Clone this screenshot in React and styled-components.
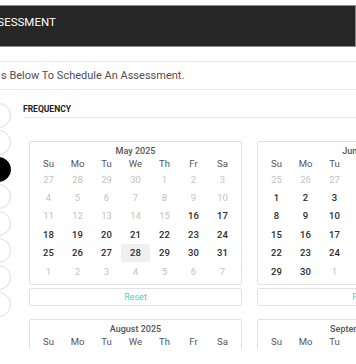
import React from "react";
import styled, { createGlobalStyle } from "styled-components";

const Global = createGlobalStyle`
  html, body { margin: 0; padding: 0; background: #fff; overflow: hidden; }
  body { font-family: Roboto, "Liberation Sans", Arial, sans-serif; }
  * { box-sizing: border-box; }
`;

const Modal = styled.div`
  margin-left: -14px;
  width: 370px;
  padding-top: 5px;
`;

const Header = styled.header`
  height: 42px;
  background: #262626;
  border: 1px solid #8c8c8c;
  display: flex;
  align-items: flex-start;
  padding-top: 9px;
`;

const Title = styled.h1`
  margin: 0 0 0 -4px;
  color: #fff;
  font-size: 11.5px;
  font-weight: 400;
  line-height: 14px;
`;

const Intro = styled.p`
  margin: 14px 0 0;
  height: 29px;
  border-top: 1px solid #ececec;
  border-bottom: 1px solid #ececec;
  padding-left: 15px;
  display: flex;
  align-items: center;
  font-size: 11px;
  color: #505050;
`;

const Body = styled.div`
  display: flex;
  align-items: flex-start;
  height: 259px;
  overflow: hidden;
`;

const Steps = styled.div`
  display: flex;
  flex-direction: column;
  gap: 2px;
  margin-top: 13px;
  flex: none;
`;

const Step = styled.div`
  width: 25px;
  height: 25px;
  border-radius: 50%;
  border: 1px solid ${(p) => (p.$active ? "#000" : "#dcdcdc")};
  background: ${(p) => (p.$active ? "#000" : "#fff")};
`;

const Main = styled.div`
  margin-left: 12px;
  flex: 1;
  min-width: 0;
`;

const SectionLabel = styled.div`
  padding-top: 14px;
  padding-bottom: 3px;
  border-bottom: 1px solid #e8e8e8;
  font-size: 8.5px;
  line-height: 10px;
  font-weight: 700;
  color: #222;
`;

const Grid = styled.div`
  display: grid;
  grid-template-columns: repeat(2, 213px);
  column-gap: 15px;
  row-gap: 13px;
  padding-left: 6px;
  margin-top: 23px;
`;

const Block = styled.div`
  display: flex;
  flex-direction: column;
  gap: 3px;
`;

const Card = styled.div`
  border: 1px solid #e2e2e2;
  border-radius: 2px;
  padding: 3px 4px 4px;
`;

const MonthTitle = styled.div`
  text-align: center;
  font-size: 9px;
  line-height: 12px;
  font-weight: 500;
  color: #555;
`;

const Days = styled.div`
  display: grid;
  grid-template-columns: repeat(7, 29px);
  grid-auto-rows: ${(p) => (p.$head ? "12px" : "18.4px")};
  margin-top: ${(p) => (p.$head ? "0" : "1px")};
`;

const DayName = styled.div`
  display: flex;
  align-items: center;
  justify-content: center;
  font-size: 9.5px;
  color: #555;
`;

const Day = styled.div`
  display: flex;
  align-items: center;
  justify-content: center;
  font-size: 9.5px;
  font-weight: ${(p) => (p.$muted ? 400 : 500)};
  color: ${(p) => (p.$muted ? "#c2c2c2" : "#2b2b2b")};
  background: ${(p) => (p.$active ? "#f0f0f0" : "transparent")};
  border-radius: 2px;
`;

const ResetBar = styled.div`
  height: 18px;
  border: 1px solid #e2e2e2;
  border-radius: 2px;
  display: flex;
  align-items: center;
  justify-content: center;
  font-size: 9px;
  color: #4fd0bd;
`;

const MONTHS = [
  "January", "February", "March", "April", "May", "June",
  "July", "August", "September", "October", "November", "December",
];
const DAY_NAMES = ["Su", "Mo", "Tu", "We", "Th", "Fr", "Sa"];
const MIN = new Date(2025, 4, 16);
const ACTIVE = new Date(2025, 4, 28).getTime();

function buildDays(year, month) {
  const first = new Date(year, month, 1);
  const back = first.getDay() || 7;
  const start = new Date(year, month, 1 - back);
  return Array.from({ length: 42 }, (_, i) => {
    const d = new Date(start.getFullYear(), start.getMonth(), start.getDate() + i);
    const inMonth = d.getMonth() === month;
    return {
      key: i,
      label: d.getDate(),
      muted: !inMonth || d < MIN,
      active: inMonth && d.getTime() === ACTIVE,
    };
  });
}

function Calendar({ year, month }) {
  const days = buildDays(year, month);
  return (
    <Block>
      <Card>
        <MonthTitle>
          {MONTHS[month]} {year}
        </MonthTitle>
        <Days $head>
          {DAY_NAMES.map((n) => (
            <DayName key={n}>{n}</DayName>
          ))}
        </Days>
        <Days>
          {days.map((d) => (
            <Day key={d.key} $muted={d.muted} $active={d.active}>
              {d.label}
            </Day>
          ))}
        </Days>
      </Card>
      <ResetBar>Reset</ResetBar>
    </Block>
  );
}

export default function App() {
  return (
    <>
      <Global />
      <Modal>
        <Header>
          <Title>ASSESSMENT</Title>
        </Header>
        <Intro>s Below To Schedule An Assessment.</Intro>
        <Body>
          <Steps>
            {Array.from({ length: 8 }, (_, i) => (
              <Step key={i} $active={i === 2} />
            ))}
          </Steps>
          <Main>
            <SectionLabel>FREQUENCY</SectionLabel>
            <Grid>
              <Calendar year={2025} month={4} />
              <Calendar year={2025} month={5} />
              <Calendar year={2025} month={7} />
              <Calendar year={2025} month={8} />
            </Grid>
          </Main>
        </Body>
      </Modal>
    </>
  );
}
